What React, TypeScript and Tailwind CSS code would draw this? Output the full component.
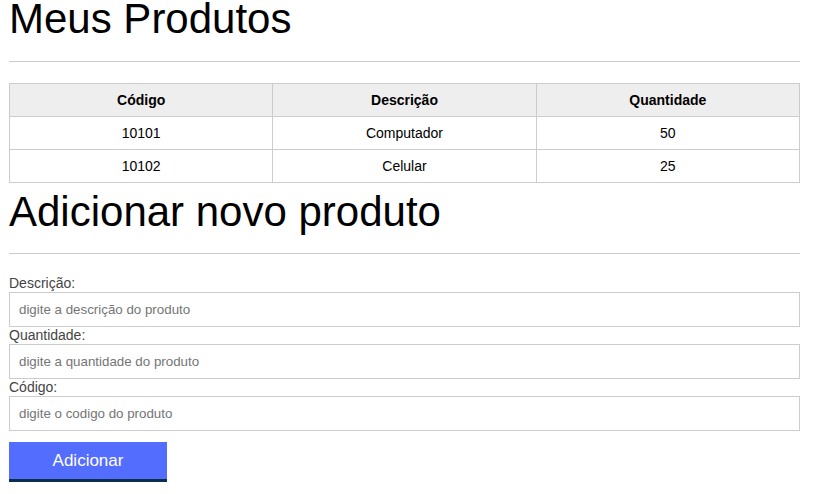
import React from 'react';

const produtos = [
  { codigo: '10101', descricao: 'Computador', quantidade: 50 },
  { codigo: '10102', descricao: 'Celular', quantidade: 25 },
];

const campos = [
  { label: 'Descrição:', placeholder: 'digite a descrição do produto' },
  { label: 'Quantidade:', placeholder: 'digite a quantidade do produto' },
  { label: 'Código:', placeholder: 'digite o codigo do produto' },
];

const App: React.FC = () => {
  return (
    <div className="w-[816px] h-[494px] bg-white px-[9px] font-['Liberation_Sans',Arial,sans-serif] text-black overflow-hidden">
      <h1 className="text-[42px] leading-[38px] font-normal">Meus Produtos</h1>
      <hr className="mt-[23px] border-0 border-t border-[#ccc] w-[791px]" />

      <table className="mt-[21px] w-[791px] border-collapse text-center">
        <thead>
          <tr className="bg-[#eee] h-[33px]">
            <th className="border border-[#ccc] text-[14px] font-bold w-1/3">Código</th>
            <th className="border border-[#ccc] text-[14px] font-bold w-1/3">Descrição</th>
            <th className="border border-[#ccc] text-[14px] font-bold w-1/3">Quantidade</th>
          </tr>
        </thead>
        <tbody>
          {produtos.map((p) => (
            <tr key={p.codigo} className="h-[33px] text-[14px]">
              <td className="border border-[#ccc]">{p.codigo}</td>
              <td className="border border-[#ccc]">{p.descricao}</td>
              <td className="border border-[#ccc]">{p.quantidade}</td>
            </tr>
          ))}
        </tbody>
      </table>

      <h2 className="mt-[10px] text-[42px] leading-[38px] font-normal">Adicionar novo produto</h2>
      <hr className="mt-[22px] border-0 border-t border-[#ccc] w-[791px]" />

      <form className="mt-[21px] flex flex-col w-[791px]" onSubmit={(e) => e.preventDefault()}>
        {campos.map((c) => (
          <div key={c.label} className="flex flex-col">
            <label className="text-[14px] leading-[17px] text-[#444]">{c.label}</label>
            <input
              className="h-[35px] border border-[#ccc] px-[9px] text-[13.33px] outline-none placeholder:text-[#757575]"
              placeholder={c.placeholder}
            />
          </div>
        ))}
        <button
          type="submit"
          className="mt-[11px] w-[158px] h-[40px] bg-[#536dfe] border-b-[3px] border-[#0b2e4f] text-white text-[17px]"
        >
          Adicionar
        </button>
      </form>
    </div>
  );
};

export default App;
